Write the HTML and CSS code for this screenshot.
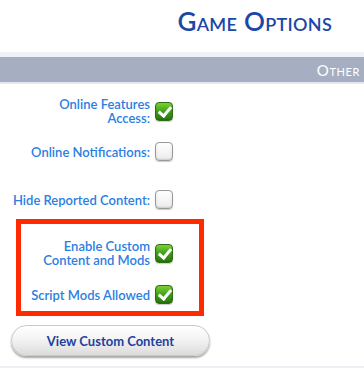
FILE: index.html
```html
<!DOCTYPE html>
<html lang="en">
<head>
  <meta charset="UTF-8" />
  <meta name="viewport" content="width=device-width, initial-scale=1.0"/>
  <title>Game Options</title>
  <link rel="stylesheet" href="styles.css">
</head>
<body>
  <header class="top">
    <h1 class="title">Game Options</h1>
  </header>

  <div class="tabbar">
    <span class="tab">Other</span>
  </div>

  <main class="options">
    <div class="row row-first">
      <span class="label">Online Features<br>Access:</span>
      <span class="box on"></span>
    </div>
    <div class="row row-second">
      <span class="label">Online Notifications:</span>
      <span class="box"></span>
    </div>
    <div class="row row-third">
      <span class="label">Hide Reported Content:</span>
      <span class="box"></span>
    </div>

    <div class="highlight">
      <div class="row row-cc">
        <span class="label">Enable Custom<br>Content and Mods</span>
        <span class="box on"></span>
      </div>
      <div class="row row-script">
        <span class="label">Script Mods Allowed</span>
        <span class="box on"></span>
      </div>
    </div>

    <button class="btn">View Custom Content</button>
  </main>

  <div class="bottomline"></div>
</body>
</html>
```

FILE: styles.css
```css
body {
  margin: 0;
  width: 364px;
  height: 368px;
  overflow: hidden;
  background: #ffffff;
  font-family: Lato, 'Open Sans', sans-serif;
}

/* header */
.top {
  height: 52px;
  display: flex;
  justify-content: flex-end;
  padding-right: 32px;
}

.title {
  margin: 0;
  padding-top: 6px;
  font-size: 26px;
  line-height: 30px;
  font-weight: 600;
  font-variant: small-caps;
  color: #1b47a8;
  letter-spacing: 0.3px;
}

.tabbar {
  border-top: 5px solid #eef1f5;
  border-bottom: 2px solid #e4e8ee;
  background: #a5afc1;
  height: 25px;
  display: flex;
  justify-content: flex-end;
  align-items: center;
  padding-right: 4px;
}

.tab {
  color: #ffffff;
  font-size: 15px;
  font-variant: small-caps;
  letter-spacing: 0.6px;
}

/* option rows */
.options {
  padding-top: 13px;
}

.row {
  width: 173px;
  display: flex;
  justify-content: flex-end;
  align-items: center;
  gap: 5px;
}

.label {
  color: #2b7ee2;
  font-size: 13px;
  line-height: 14px;
  text-align: right;
  font-weight: 600;
}

.row-second { margin-top: 17px; }
.row-third { margin-top: 29px; }

.highlight {
  margin: 10px 0 0 16px;
  width: 178px;
  border: 5px solid #ff2a00;
  padding: 15px 0 7px;
}

.highlight .row { width: 152px; }
.row-script { margin-top: 18px; }

.box {
  width: 16px;
  height: 17px;
  border: 1px solid #9a9a9a;
  border-radius: 4px;
  background: linear-gradient(#ffffff, #ececec);
  box-shadow: inset 0 -1px 2px rgba(0,0,0,0.15), 0 1px 1px rgba(0,0,0,0.2);
  flex: none;
  position: relative;
}

.box.on {
  border-color: #2f6d14;
  background: linear-gradient(#7cd235, #3a9a17 55%, #2a7a0e);
}

.box.on::after {
  content: '';
  position: absolute;
  left: 5px;
  top: 1px;
  width: 5px;
  height: 10px;
  border: solid #ffffff;
  border-width: 0 3px 3px 0;
  transform: rotate(40deg);
}

/* button */
.btn {
  display: block;
  margin: 9px 0 0 11px;
  width: 199px;
  height: 31px;
  border: 1px solid #c9c9c9;
  border-radius: 16px;
  background: linear-gradient(#ffffff, #f4f4f4 45%, #dcdcdc);
  box-shadow: 0 2px 2px rgba(0,0,0,0.35);
  color: #1e409e;
  font-family: Lato, 'Open Sans', sans-serif;
  font-size: 13px;
  font-weight: 700;
}

.bottomline {
  position: absolute;
  left: 0;
  top: 366px;
  width: 364px;
  height: 2px;
  background: #eceff3;
}
```
